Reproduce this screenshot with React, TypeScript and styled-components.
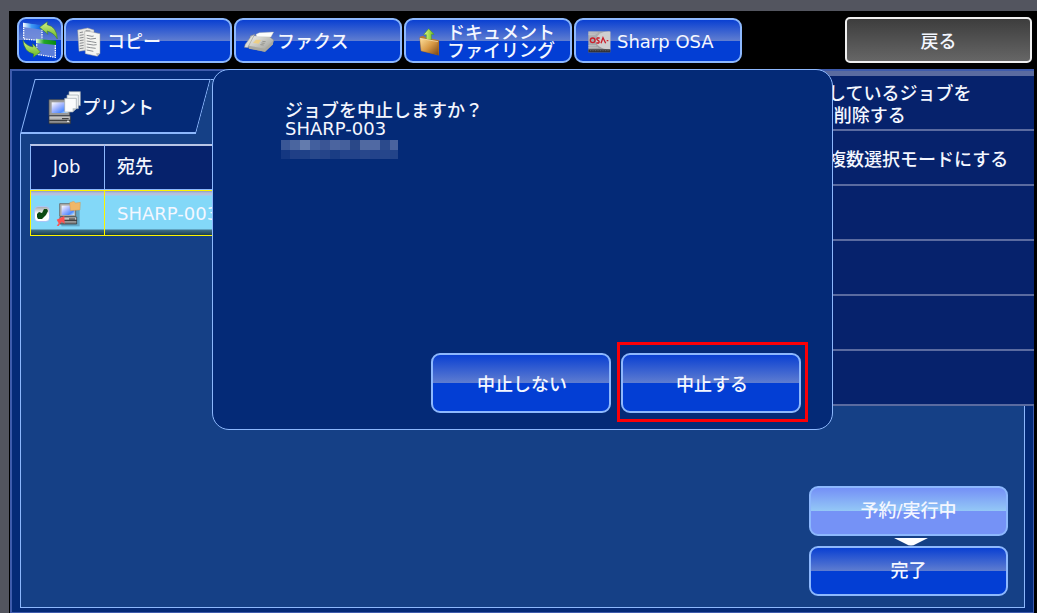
import React from "react";
import styled, { createGlobalStyle, css } from "styled-components";

const color = {
  bezel: "#53555f",
  panel: "#042a77",
  panelEdge: "#3e5bac",
  body: "#154086",
  line: "#8db8fd",
  cell: "#06226c",
  rule: "#5a6ba0",
  row: "#83d8f8",
  select: "#fdf500",
};

const GlobalStyle = createGlobalStyle`
  *, *::before, *::after { box-sizing: border-box; }
  body {
    margin: 0;
    background: ${color.bezel};
    color: #f4f7ff;
    font-family: "DejaVu Sans", "Noto Sans CJK JP", sans-serif;
    font-size: 18px;
    font-weight: 500;
    line-height: 18px;
  }
  button { font: inherit; color: inherit; cursor: pointer; }
  svg { display: block; flex: none; }
`;

const Screen = styled.div`
  min-height: 100vh;
  padding: 11px 0 0 9px;
  display: flex;
`;

const Device = styled.div`
  flex: 1;
  min-width: 0;
  background: #000;
  display: flex;
  flex-direction: column;
  padding: 0 3px 0 1px;
`;

const TopBar = styled.header`
  display: flex;
  align-items: flex-end;
  gap: 1px;
  padding: 6px 2px 6px 7px;
`;

const Modes = styled.nav`
  display: flex;
  gap: 2px;
`;

const GlossButton = styled.button<{ $active?: boolean }>`
  border: 2px solid ${color.line};
  border-radius: 9px;
  padding: 0;
  display: flex;
  align-items: center;
  justify-content: center;
  background: ${(p) =>
    p.$active
      ? "linear-gradient(#7490f6, #94c8f6 50%, #7592f6 50%)"
      : "linear-gradient(#0a40d2, #5f7dd0 50%, #033ed4 50%)"};
`;

const SwitchButton = styled(GlossButton)`
  width: 46px;
  height: 46px;
`;

const ModeButton = styled(GlossButton)`
  width: 168px;
  height: 45px;
  padding: 2px 0 0 9px;
  gap: 4px;
  justify-content: flex-start;
  text-align: left;
`;

const IconSlot = styled.span`
  width: 28px;
  display: flex;
  justify-content: center;
`;

const BackButton = styled.button`
  width: 187px;
  height: 46px;
  margin-left: auto;
  padding: 4px 0 0;
  border: 2px solid #f0f0f0;
  border-radius: 5px;
  background: linear-gradient(#3d3d3d, #666);
`;

const Stage = styled.div`
  flex: 1;
  position: relative;
  display: grid;
`;

const Panel = styled.main`
  display: grid;
  background: ${color.panel};
  border: solid ${color.panelEdge};
  border-width: 2px 1px 1px 2px;
`;

const Content = styled.section`
  grid-area: 1 / 1;
  display: flex;
  flex-direction: column;
  padding: 8px 8px 4px;
`;

const TabStrip = styled.div`
  display: flex;
  height: 55px;
`;

const slanted = css`
  position: relative;
  &::before {
    content: "";
    position: absolute;
    inset: 0;
    transform: skewX(-15deg);
    transform-origin: bottom;
    border: 1px solid ${color.line};
  }
`;

const Tab = styled.button`
  ${slanted}
  width: 176px;
  border: 0;
  background: none;
  padding: 2px 0 0 28px;
  display: flex;
  align-items: center;
  &::before { border-bottom-width: 2px; }
  & > * { position: relative; }
`;

const TabRest = styled.div`
  ${slanted}
  flex: 1;
  margin-right: 16px;
  &::before {
    background: ${color.body};
    border-width: 1px 0 0;
  }
`;

const Body = styled.div`
  flex: 1;
  display: flex;
  flex-direction: column;
  justify-content: space-between;
  background: ${color.body};
  border: solid ${color.line};
  border-width: 0 1px 1px;
  padding: 10px 16px 11px 9px;
`;

const JobTable = styled.table`
  width: calc(100% - 200px);
  table-layout: fixed;
  border-collapse: separate;
  border-spacing: 0;
  text-align: left;
`;

const Head = styled.th<{ $narrow?: boolean }>`
  width: ${(p) => (p.$narrow ? "74px" : "auto")};
  height: 46px;
  padding: ${(p) => (p.$narrow ? "0 2px 2px 0" : "0 12px 2px")};
  text-align: ${(p) => (p.$narrow ? "center" : "left")};
  font-weight: 500;
  background: ${color.cell};
  border: 1px solid ${color.line};
  border-top: 2px solid #b9c6e6;
  border-right: 0;
`;

const Cell = styled.td<{ $narrow?: boolean }>`
  height: 46px;
  padding: ${(p) => (p.$narrow ? "2px 0 0 3px" : "2px 12px 0")};
  border: 1px solid ${color.select};
  border-right: 0;
  background: linear-gradient(#8f9cc0, #b4bfdc 2px, #b4c3e2 4px, ${color.row} 5px, ${color.row} 38px, #3f6f88 39px, #1b3d50 44px);
`;

const JobMarks = styled.div`
  display: flex;
  align-items: center;
  gap: 6px;
`;

const Tick = styled.label`
  display: grid;
  & > * { grid-area: 1 / 1; }
  & > svg { pointer-events: none; }
`;

const TickBox = styled.input`
  appearance: none;
  margin: 0;
  width: 16px;
  height: 16px;
  border: 1px solid #a9c6f8;
  border-radius: 4px;
  background: linear-gradient(#a5adb0, #fff 50%);
`;

const QueueSwitch = styled.div`
  align-self: flex-end;
  width: 199px;
  display: flex;
  flex-direction: column;
`;

const QueueButton = styled(GlossButton)`
  height: 50px;
`;

const Arrow = styled.svg`
  align-self: center;
  margin: 2px 0 0;
`;

const Menu = styled.aside`
  grid-area: 1 / 1;
  justify-self: end;
  align-self: start;
  z-index: 1;
  width: 212px;
  margin-right: -1px;
  border-top: 5px solid ${color.rule};
`;

const MenuItem = styled.button`
  display: block;
  width: 100%;
  height: 55px;
  border: 0;
  border-bottom: 2px solid ${color.rule};
  background: ${color.cell};
  padding: 4px 0 0 6px;
  text-align: left;
  line-height: 22px;
  white-space: nowrap;
`;

const Overlay = styled.div`
  position: absolute;
  inset: 0;
  z-index: 2;
  display: flex;
  align-items: flex-start;
  padding: 0 201px 0 202px;
`;

const Dialog = styled.section`
  flex: 1;
  min-height: 361px;
  display: flex;
  flex-direction: column;
  justify-content: space-between;
  background: ${color.panel};
  border: 1px solid ${color.line};
  border-radius: 17px;
  padding: 32px 31px 16px 72px;
`;

const Message = styled.p`
  margin: 0;
`;

const Mosaic = styled.svg`
  margin: 2px 0 0 -4px;
`;

const Actions = styled.div`
  display: flex;
  justify-content: flex-end;
  gap: 10px;
`;

const ActionButton = styled(GlossButton)<{ $marked?: boolean }>`
  position: relative;
  width: 180px;
  height: 60px;
  padding: 4px 0 0 2px;
  ${(p) =>
    p.$marked &&
    css`
      &::after {
        content: "";
        position: absolute;
        inset: -13px -9px -11px -6px;
        border: 3px solid #fb0007;
      }
    `}
`;

const SwitchIcon = () => (
  <svg width="37" height="38" viewBox="66 64 111 114" aria-hidden="true">
    <defs>
      <linearGradient id="swBlue"><stop stopColor="#fff" /><stop offset=".45" stopColor="#3f9af5" /><stop offset="1" stopColor="#0b5be0" /></linearGradient>
      <linearGradient id="swGreen"><stop stopColor="#e9ffe4" /><stop offset=".4" stopColor="#23a52a" /><stop offset="1" stopColor="#078a10" /></linearGradient>
      <linearGradient id="swArrow" x2="0" y2="1"><stop stopColor="#d5f08a" /><stop offset="1" stopColor="#63b51e" /></linearGradient>
    </defs>
    <path d="M69 69L126 78V122L69 118Z" fill="#7b93dc" fillOpacity=".75" />
    <path d="M71 84V118L126 123V86" fill="none" stroke="#fff" strokeWidth="4" strokeDasharray="4 3" />
    <path d="M69 69L126 77V90L69 82Z" fill="url(#swBlue)" />
    <path d="M108 118L168 124V174L108 164Z" fill="#7b93dc" fillOpacity=".75" />
    <path d="M110 134V164L166 173V136" fill="none" stroke="#fff" strokeWidth="4" strokeDasharray="4 3" />
    <path d="M108 117L168 123V136L108 130Z" fill="url(#swGreen)" />
    <path d="M119 83L142 66L141 75Q171 81 172 118Q161 99 141 94L144 104Z" fill="url(#swArrow)" stroke="#3d7d1c" strokeWidth="1.5" />
    <path d="M69 122Q79 139 99 142L98 132L121 157L100 173L101 163Q72 157 69 122Z" fill="url(#swArrow)" stroke="#3d7d1c" strokeWidth="1.5" />
  </svg>
);

const CopyIcon = () => (
  <svg width="24" height="30" viewBox="230 79 72 90" aria-hidden="true">
    <path d="M232 88L262 82L281 88V146L236 152Z" fill="#e9e9e6" stroke="#9a9a9a" strokeWidth="1.5" />
    <path d="M238 96l10-2M238 104l12-2M238 112l12-2M238 120l12-2M238 128l12-2M238 136l12-2M238 144l12-2M256 90l14 1" stroke="#77797e" strokeWidth="2.5" fill="none" />
    <path d="M253 92L270 93L299 99V158L291 167L255 159Z" fill="#f5f5f2" stroke="#9a9a9a" strokeWidth="1.5" />
    <path d="M259 104l16 3l5-1M259 112l12 3l16-2M259 121l14 2l15 3M259 130l20 3l10-1M259 139l11 2l16 2M259 148l20 4" stroke="#77797e" strokeWidth="2.5" fill="none" />
    <path d="M299 157L287 158L291 167Z" fill="#bcbcb8" />
  </svg>
);

const FaxIcon = () => (
  <svg width="30" height="22" viewBox="42 94 90 66" aria-hidden="true">
    <defs>
      <linearGradient id="fax" x2="1" y2="1"><stop stopColor="#f2f2ee" /><stop offset="1" stopColor="#96968f" /></linearGradient>
    </defs>
    <path d="M62 108L117 110L131 121L128 134L105 156L56 146L54 134Z" fill="url(#fax)" stroke="#77776f" strokeWidth="1" />
    <path d="M56 138L105 147L131 122L128 135L105 156L57 147Z" fill="#aaa9a0" />
    <path d="M64 109L74 104L53 144L43 143L46 134Z" fill="#deded8" stroke="#8b8b84" strokeWidth="1.5" />
    <path d="M78 104L88 99L131 97L123 112L80 111Z" fill="#fdfdfb" stroke="#b5b5ae" strokeWidth="1" />
    <path d="M78 120L93 121L86 132L69 130Z" fill="#edcf86" />
    <path d="M97 125l10 1M94 130l10 1M91 135l10 1" stroke="#8d8d86" strokeWidth="2.5" />
  </svg>
);

const FolderIcon = () => (
  <svg width="21" height="28" viewBox="567 82 63 84" aria-hidden="true">
    <defs>
      <linearGradient id="folder" x2="1" y2="1"><stop stopColor="#ffe3a0" /><stop offset=".5" stopColor="#d99a45" /><stop offset="1" stopColor="#754212" /></linearGradient>
      <linearGradient id="up"><stop stopColor="#e6fa8c" /><stop offset="1" stopColor="#69bd1f" /></linearGradient>
    </defs>
    <path d="M569 108L580 105L586 110L627 119V164L573 150Z" fill="#b87a34" />
    <path d="M589 117V102H581L596 84L612 101H604V118Z" fill="url(#up)" stroke="#4b951c" strokeWidth="1.5" />
    <path d="M569 112L624 122L626 164L573 151Z" fill="url(#folder)" stroke="#8e5a22" strokeWidth="1" />
    <path d="M570 113L624 123" stroke="#fff0c5" strokeWidth="2" />
  </svg>
);

const OsaIcon = () => (
  <svg width="23" height="22" viewBox="320 92 69 66" aria-hidden="true">
    <defs>
      <linearGradient id="osa" x2="1" y2="1"><stop stopColor="#b6b6b8" /><stop offset="1" stopColor="#8e8e92" /></linearGradient>
    </defs>
    <rect x="321" y="93" width="66" height="63" fill="url(#osa)" />
    <path d="M387 94Q350 92 344 118Q343 144 387 148Z" fill="#cfcfd0" />
    <path d="M321 98h28M321 103h22M321 136h24M321 141h30" stroke="#d6d6d8" strokeWidth="1.5" />
    <circle cx="334" cy="120" r="7" fill="none" stroke="#cb1f2b" strokeWidth="4" />
    <path d="M355 113H348Q344 117 350 120Q356 124 352 128H345M359 129L365 112L373 129M376 121h5" fill="none" stroke="#cb1f2b" strokeWidth="4" />
    <path d="M321 147H387V156H321Z" fill="#303036" />
    <path d="M326 151h58" stroke="#777" strokeWidth="2" strokeDasharray="3 2" />
  </svg>
);

const PrintIcon = () => (
  <svg width="34" height="34" viewBox="148 269 102 102" aria-hidden="true">
    <defs>
      <linearGradient id="crt" x2="1" y2="1"><stop stopColor="#fff" /><stop offset=".4" stopColor="#a9b9ff" /><stop offset=".75" stopColor="#4f8bff" /><stop offset="1" stopColor="#d2f6ff" /></linearGradient>
      <linearGradient id="box" x2="0" y2="1"><stop stopColor="#d6d6d6" /><stop offset="1" stopColor="#747474" /></linearGradient>
    </defs>
    <path d="M151 295H213V343H151Z" fill="#9a9a9a" stroke="#4c4c4c" strokeWidth="2" />
    <path d="M159 303H207V335H159Z" fill="url(#crt)" />
    <path d="M151 344H215V367H151Z" fill="url(#box)" stroke="#303030" strokeWidth="2" />
    <path d="M152 357H215M190 352H210" stroke="#151515" strokeWidth="2.5" />
    <rect x="205" y="358" width="6" height="4" fill="#e8e8e8" />
    <path d="M211 271H245V313H211Z" fill="#f7f9fa" stroke="#98a3ac" strokeWidth="2" />
    <path d="M205 281H239V322H205Z" fill="#f4f6f7" stroke="#98a3ac" strokeWidth="2" />
    <path d="M198 291H233V322L222 332H198Z" fill="#fbfcfc" stroke="#98a3ac" strokeWidth="2" />
    <path d="M233 321L222 321V332Z" fill="#b7c0c4" />
  </svg>
);

const JobIcon = () => (
  <svg width="26" height="27" viewBox="135 212 78 81" aria-hidden="true">
    <path d="M151 226H206V288H151Z" fill="#3b6f8b" opacity=".45" />
    <path d="M146 220H194V258H146Z" fill="#b5b2ae" stroke="#55504c" strokeWidth="2" />
    <path d="M152 226H190V254H152Z" fill="url(#crt)" />
    <path d="M147 260H197V281H147Z" fill="url(#box)" stroke="#303030" strokeWidth="2" />
    <path d="M148 270H197M174 266H192" stroke="#151515" strokeWidth="2.5" />
    <path d="M176 217L188 213L194 218L208 216L207 239L178 241Z" fill="#efb768" stroke="#c98a40" strokeWidth="1" />
    <path d="M137 286L143 279L137 268L160 257L161 280L152 274L143 287Z" fill="#fb5252" />
  </svg>
);

const tones = [
  ["#3a5796", "#4a659f", "#637bad", "#425f9e", "#3a5595", "#4b649f", "#45609c", "#2a4888", "#5069a1", "#5069a3", "#2b4a8c", "#4a639f"],
  ["#143781", "#203f86", "#1f4187", "#28488b", "#254489", "#1a3d84", "#23438a", "#23438a", "#28478b", "#23438b", "#26468b", "#234489"],
];

const modes = [
  { icon: <CopyIcon />, label: "コピー" },
  { icon: <FaxIcon />, label: "ファクス" },
  { icon: <FolderIcon />, label: <>ドキュメント<br />ファイリング</> },
  { icon: <OsaIcon />, label: "Sharp OSA" },
];

const menuItems: React.ReactNode[] = [
  <>しているジョブを<br />&nbsp;削除する</>,
  "複数選択モードにする",
  "",
  "",
  "",
  "",
];

export default function App() {
  return (
    <Screen>
      <GlobalStyle />
      <Device>
        <TopBar>
          <SwitchButton aria-label="切り替え"><SwitchIcon /></SwitchButton>
          <Modes>
            {modes.map((m, i) => (
              <ModeButton key={i}>
                <IconSlot>{m.icon}</IconSlot>
                <span>{m.label}</span>
              </ModeButton>
            ))}
          </Modes>
          <BackButton>戻る</BackButton>
        </TopBar>
        <Stage>
          <Panel>
            <Content>
              <TabStrip>
                <Tab>
                  <PrintIcon />
                  <span>プリント</span>
                </Tab>
                <TabRest />
              </TabStrip>
              <Body>
                <JobTable>
                  <thead>
                    <tr>
                      <Head $narrow>Job</Head>
                      <Head>宛先</Head>
                    </tr>
                  </thead>
                  <tbody>
                    <tr>
                      <Cell $narrow>
                        <JobMarks>
                          <Tick>
                            <TickBox type="checkbox" defaultChecked aria-label="SHARP-003" />
                            <svg width="16" height="16" viewBox="0 0 16 16" aria-hidden="true">
                              <path d="M3 8L5 6L8 7L10 3L13 3L14 5L12 9L8 13L4 13L3 11Z" fill="#0b4a12" />
                            </svg>
                          </Tick>
                          <JobIcon />
                        </JobMarks>
                      </Cell>
                      <Cell>SHARP-003</Cell>
                    </tr>
                  </tbody>
                </JobTable>
                <QueueSwitch>
                  <QueueButton $active>予約/実行中</QueueButton>
                  <Arrow width="39" height="8" viewBox="0 0 39 8" aria-hidden="true">
                    <path d="M5 0H39L27 6Q22 9 17 6Z" fill="#fff" />
                  </Arrow>
                  <QueueButton>完了</QueueButton>
                </QueueSwitch>
              </Body>
            </Content>
            <Menu>
              {menuItems.map((label, i) => (
                <MenuItem key={i}>{label}</MenuItem>
              ))}
            </Menu>
          </Panel>
          <Overlay>
            <Dialog role="dialog" aria-labelledby="question">
              <div>
                <Message id="question">ジョブを中止しますか？</Message>
                <Message>SHARP-003</Message>
                <Mosaic width="117" height="19" viewBox="0 0 117 19" shapeRendering="crispEdges" aria-hidden="true">
                  {tones.map((row, y) =>
                    row.map((fill, x) => (
                      <rect key={`${x}-${y}`} x={x * 10 - 1} y={y * 10} width="10" height="10" fill={fill} />
                    ))
                  )}
                </Mosaic>
              </div>
              <Actions>
                <ActionButton>中止しない</ActionButton>
                <ActionButton $marked>中止する</ActionButton>
              </Actions>
            </Dialog>
          </Overlay>
        </Stage>
      </Device>
    </Screen>
  );
}
